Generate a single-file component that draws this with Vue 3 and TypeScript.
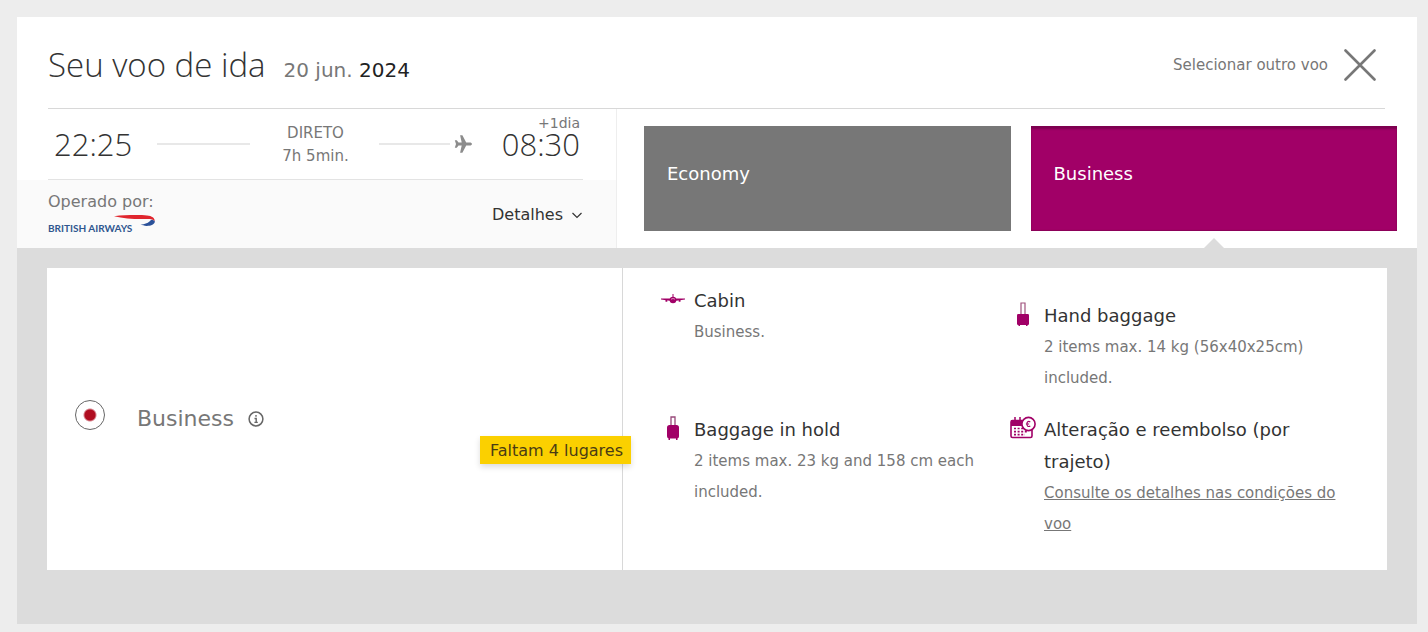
<script setup lang="ts">
import { ref } from 'vue'

interface Benefit {
  icon: 'cabin' | 'hand' | 'hold' | 'change'
  title: string
  text: string
  link?: boolean
}

const cabins = ['Economy', 'Business']
const selectedCabin = ref('Business')
const fare = ref('business')

const benefits: Benefit[] = [
  { icon: 'cabin', title: 'Cabin', text: 'Business.' },
  { icon: 'hand', title: 'Hand baggage', text: '2 items max. 14 kg (56x40x25cm) included.' },
  { icon: 'hold', title: 'Baggage in hold', text: '2 items max. 23 kg and 158 cm each included.' },
  { icon: 'change', title: 'Alteração e reembolso (por trajeto)', text: 'Consulte os detalhes nas condições do voo', link: true },
]
</script>

<template>
  <main class="page">
    <section class="flight">
      <header class="head">
        <h1 class="title">Seu voo de ida</h1>
        <p class="date">20 jun. <span class="year">2024</span></p>
        <button class="close" type="button">
          Selecionar outro voo
          <svg width="32" height="32" viewBox="0 0 32 32" aria-hidden="true">
            <path d="M1.5 1.5 30.5 30.5M30.5 1.5 1.5 30.5" stroke="#777" stroke-width="2.6" stroke-linecap="round" />
          </svg>
        </button>
      </header>

      <div class="summary">
        <div class="journey">
          <div class="times">
            <time class="clock">22:25</time>
            <span class="track first"><i class="line"></i></span>
            <p class="duration">DIRETO<br />7h 5min.</p>
            <span class="track second">
              <i class="line"></i>
              <svg width="18" height="18" viewBox="0 0 18 18" aria-hidden="true">
                <path fill="#8c8c8c" d="M18 9c0 .9-1 1.500-2.200 1.500h-3.600L8.400 17.800H6.100l1.600-7.300H4.500l-1.700 2.300H.8L2 9 .8 5.200h2l1.700 2.300h3.200L6.100.2h2.300l3.800 7.300h3.600C17 7.500 18 8.100 18 9z" />
              </svg>
            </span>
            <div class="arrival">
              <span class="plus">+1dia</span>
              <time class="clock">08:30</time>
            </div>
          </div>
          <div class="operator">
            <div class="carrier">
              <span>Operado por:</span>
              <svg class="logo" width="108" height="20" viewBox="0 0 108 20" role="img" aria-label="British Airways">
                <text x="0" y="18" class="logo-text">BRITISH AIRWAYS</text>
                <path fill="#e0262e" d="M66 2.200C78 .8 92 1 99 1.400c5 .4 7.800 2.500 7.800 5.600-2-1.700-4.300-2-8-2C86 5.200 76 4.700 66 2.200z" />
                <path fill="#2b5199" d="M92.500 10.600c4-.3 8.500-1.500 10.500-4.800 2.600 0 4.200 1 3.800 2.200-.8 2.800-4.800 4-8.300 3.900-2.300-.1-4-.6-6-1.300z" />
              </svg>
            </div>
            <button class="details" type="button">
              Detalhes
              <svg width="12" height="11" viewBox="0 -3 12 11" aria-hidden="true">
                <path d="M1.500 1 6 5.500l4.500-4.500" fill="none" stroke="#333" stroke-width="1.200" />
              </svg>
            </button>
          </div>
        </div>

        <div class="tabs">
          <button
            v-for="cabin in cabins"
            :key="cabin"
            type="button"
            class="tab"
            :class="{ active: cabin === selectedCabin }"
            :aria-pressed="cabin === selectedCabin"
            @click="selectedCabin = cabin"
          >
            {{ cabin }}
          </button>
        </div>
      </div>

      <div class="panel">
        <article class="fare">
          <div class="choice">
            <input id="fare-business" v-model="fare" class="radio" type="radio" name="fare" value="business" />
            <label class="fare-name" for="fare-business">Business</label>
            <button class="info" type="button" aria-label="Info">
              <svg width="16" height="16" viewBox="0 0 16 16" aria-hidden="true">
                <circle cx="8" cy="8" r="6.900" fill="none" stroke="#666" stroke-width="1.500" />
                <path d="M8 4v1.700M6.500 7.500H8.200V11.200M6.400 11.400h3.400" fill="none" stroke="#666" stroke-width="1.400" />
              </svg>
            </button>
            <span class="badge">Faltam 4 lugares</span>
          </div>

          <ul class="benefits">
            <li v-for="item in benefits" :key="item.icon" class="benefit" :class="item.icon">
              <span class="icon">
                <svg v-if="item.icon === 'cabin'" width="24" height="14" viewBox="0 0 24 14" aria-hidden="true">
                  <path d="M0 5.500h24v1l-8.500 1.300h-7L0 6.500z" fill="#a10067" />
                  <path d="M11.500 1h1v4h-1z" fill="#a10067" />
                  <circle cx="12" cy="7" r="3.300" fill="#a10067" />
                  <path d="M10 6.200q2-1.400 4 0" fill="none" stroke="#e5b3d0" stroke-width=".8" />
                  <path d="M4.500 6.500h1.800v2.300H4.500zM17.700 6.500h1.800v2.300h-1.800z" fill="#a10067" />
                </svg>
                <svg v-else-if="item.icon === 'hand'" width="24" height="24" viewBox="0 0 24 24" aria-hidden="true">
                  <path d="M10 12V1h4V12" fill="none" stroke="#a0527d" stroke-width="1.200" />
                  <rect x="6" y="12" width="12" height="11" rx="1.200" fill="#a10067" />
                  <path d="M7.500 22h1.500v2H7.500zM15 22h1.500v2H15z" fill="#a10067" />
                </svg>
                <svg v-else-if="item.icon === 'hold'" width="24" height="24" viewBox="0 0 24 24" aria-hidden="true">
                  <path d="M10 10V1h4V10" fill="none" stroke="#98497a" stroke-width="1.300" />
                  <rect x="6" y="9" width="12" height="13.500" rx="2.500" fill="#a10067" />
                  <path d="M7.500 21h1.500v3H7.500zM15 21h1.500v3H15z" fill="#a10067" />
                </svg>
                <svg v-else width="26" height="24" viewBox="0 0 26 24" aria-hidden="true">
                  <path d="M1 4h15l2 6H1z" fill="#a10067" />
                  <path d="M5 1v5M10 1v5" stroke="#a10067" stroke-width="1.500" />
                  <rect x="1" y="4.500" width="21" height="17" rx="1.500" fill="none" stroke="#a10067" stroke-width="1.600" />
                  <path d="M4 12.500h14M4 15.700h14M4 18.700h11" stroke="#a10067" stroke-width="1.700" stroke-dasharray="2 1.600" />
                  <circle cx="18.500" cy="8" r="6.600" fill="#fff" stroke="#a10067" stroke-width="1.600" />
                  <path d="M20.300 5.900c-2.300-1.300-3.400.2-3.400 2.100s1.200 3.300 3.400 2M15.900 8h3.300" fill="none" stroke="#a10067" stroke-width="1.100" />
                </svg>
              </span>
              <div class="copy">
                <h2 class="benefit-title">{{ item.title }}</h2>
                <a v-if="item.link" class="benefit-text" href="#">{{ item.text }}</a>
                <p v-else class="benefit-text">{{ item.text }}</p>
              </div>
            </li>
          </ul>
        </article>
      </div>
    </section>
  </main>
</template>

<style>
body {
  background: #ededed;
}
</style>

<style scoped>
* {
  box-sizing: border-box;
}

.page {
  padding: 17px 11px 8px 17px;
  font-family: "DejaVu Sans", Verdana, sans-serif;
  font-size: 16px;
  color: #333;
}

h1,
h2,
p,
ul {
  margin: 0;
  padding: 0;
  font-weight: 400;
}

button {
  padding: 0;
  border: 0;
  background: none;
  font-family: inherit;
  cursor: pointer;
}

svg {
  display: block;
  flex: none;
}

.flight {
  background: #fff;
}

.head {
  display: flex;
  align-items: baseline;
  margin: 0 32px 0 31px;
  padding: 24px 0 19px;
  border-bottom: 1px solid #d8d8d8;
}

.title {
  font-family: "Open Sans", sans-serif;
  font-size: 33px;
  font-weight: 300;
  line-height: 48px;
}

.date {
  margin-left: 18px;
  font-size: 20px;
  color: #777;
}

.year {
  color: #222;
}

.close {
  display: flex;
  align-items: center;
  align-self: center;
  gap: 16px;
  margin: 0 9px 0 auto;
  font-size: 15px;
  color: #777;
}

.summary {
  display: grid;
  grid-template-columns: 3fr 4fr;
}

.journey {
  border-right: 1px solid #eee;
}

.times {
  display: flex;
  align-items: center;
  height: 71px;
  margin: 0 33px 0 31px;
  padding: 0 3px 0 6px;
  border-bottom: 1px solid #e3e3e3;
}

.clock {
  font-family: "Open Sans", sans-serif;
  font-size: 31px;
  font-weight: 300;
  line-height: 26px;
}

.track {
  display: flex;
  flex: 1;
  align-items: center;
  gap: 4px;
}

.first {
  margin: 0 32px 0 25px;
}

.second {
  margin: 0 30px;
}

.line {
  flex: 1;
  height: 2px;
  background: #e8e8e8;
}

.duration {
  padding-top: 2px;
  font-size: 15px;
  line-height: 23px;
  text-align: center;
  color: #777;
}

.arrival {
  display: flex;
  flex-direction: column;
  align-items: flex-end;
  padding-bottom: 16px;
}

.plus {
  font-size: 14px;
  line-height: 16px;
  color: #777;
}

.operator {
  display: flex;
  align-items: center;
  justify-content: space-between;
  height: 68px;
  padding: 0 33px 0 31px;
  background: #fafafa;
}

.carrier {
  display: flex;
  flex-direction: column;
  gap: 2px;
  padding-bottom: 3px;
  line-height: 20px;
  color: #777;
}

.logo-text {
  font-family: Lato, sans-serif;
  font-size: 10px;
  font-weight: 700;
  fill: #2f568f;
}

.details {
  display: flex;
  align-items: center;
  gap: 8px;
  font-size: 16px;
  color: #333;
}

.tabs {
  display: grid;
  grid-template-columns: 1fr 1fr;
  gap: 20px;
  padding: 17px 20px 17px 27px;
}

.tab {
  position: relative;
  padding: 0 23px 10px;
  background: #777;
  font-size: 18px;
  text-align: left;
  color: #fff;
}

.tab.active {
  background: #a10067;
  box-shadow: inset 0 3px 2px #7d0050, inset 0 -1px 1px #8a0058;
}

.tab.active::after {
  content: "";
  position: absolute;
  bottom: -17px;
  left: 50%;
  margin-left: -10px;
  border: 10px solid transparent;
  border-top-width: 0;
  border-bottom-color: #dcdcdc;
}

.panel {
  padding: 20px 30px 54px;
  background: #dcdcdc;
}

.fare {
  display: grid;
  grid-template-columns: 576fr 764fr;
  background: #fff;
}

.choice {
  position: relative;
  display: flex;
  align-items: center;
  padding-left: 28px;
  border-right: 1px solid #d8d8d8;
}

.radio {
  appearance: none;
  width: 30px;
  height: 30px;
  margin: 0 32px 8px 0;
  border: 1px solid #666;
  border-radius: 50%;
}

.radio:checked {
  background: radial-gradient(circle, #b00d20 5px, #fff 7px);
}

.fare-name {
  padding-bottom: 2px;
  font-size: 22px;
  color: #777;
}

.info {
  margin-left: 14px;
}

.badge {
  position: absolute;
  top: 168px;
  right: -9px;
  padding: 2px 8px 0 10px;
  background: #fbd000;
  box-shadow: 0 3px 6px rgba(0, 0, 0, 0.14);
  line-height: 26px;
  color: #4a3c14;
}

.benefits {
  display: grid;
  grid-template-columns: 1fr 1fr;
  gap: 20px 12px;
  padding: 17px 38px 30px;
  list-style: none;
}

.benefit {
  display: flex;
  gap: 9px;
}

.hand {
  padding-top: 15px;
}

.icon {
  display: flex;
  flex: none;
  align-items: center;
  justify-content: center;
  width: 24px;
  height: 28px;
}

.cabin .icon {
  height: 30px;
}

.benefit-title {
  font-size: 18px;
  line-height: 32px;
}

.benefit-text {
  display: block;
  font-size: 15px;
  line-height: 31px;
  color: #777;
}
</style>
